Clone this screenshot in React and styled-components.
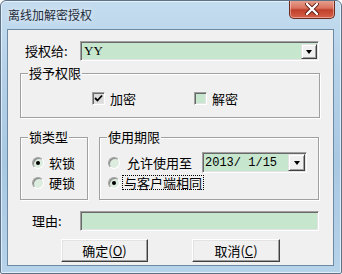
import React from 'react'
import styled, { createGlobalStyle } from 'styled-components'

const GlobalStyle = createGlobalStyle`
    html, body {
        margin: 0;
        padding: 0;
        background: #ffffff;
    }
    * {
        box-sizing: border-box;
    }
`;

const CJK = `"SimSun", "Noto Sans CJK SC", "DejaVu Sans", sans-serif`;

const Frame = styled.div`
    width: 342px;
    height: 274px;
    display: flex;
    flex-direction: column;
    padding: 0 7px 7px 6px;
    border: 1px solid #5b7288;
    border-radius: 6px 6px 2px 2px;
    background: linear-gradient(180deg, #c4dcef 0%, #b3d0e8 30%, #a9c8e2 60%, #b6d3ea 100%);
    box-shadow: inset 0 0 0 1px rgba(255, 255, 255, 0.6);
    overflow: hidden;
`;

const TitleBar = styled.div`
    height: 28px;
    display: flex;
    align-items: flex-start;
    justify-content: space-between;
`;

const Title = styled.div`
    margin: 7px 0 0 1px;
    font-family: ${CJK};
    font-size: 12px;
    line-height: 14px;
    color: #1e2b3a;
    text-shadow: 0 0 6px rgba(255, 255, 255, 0.9);
`;

const CloseButton = styled.div`
    width: 46px;
    height: 19px;
    margin-right: -1px;
    margin-top: -1px;
    display: flex;
    align-items: center;
    justify-content: center;
    border: 1px solid #6b2a22;
    border-top: none;
    border-radius: 0 0 5px 5px;
    background: linear-gradient(180deg, #e8a493 0%, #d8735f 45%, #c0402a 55%, #d5604a 100%);
    box-shadow: inset 0 0 0 1px rgba(255, 220, 210, 0.5);
`;

const Client = styled.div`
    flex: 1;
    background: #f0f0f0;
    border: 1px solid #6d8aa5;
    padding: 11px 14px 0 12px;
    display: flex;
    flex-direction: column;
    font-family: ${CJK};
    font-size: 13px;
    color: #000;
`;

const Row = styled.div`
    display: flex;
    align-items: center;
    height: ${p => p.$h || 20}px;
    margin-top: ${p => p.$mt || 0}px;
`;

const Label = styled.div`
    width: 60px;
    padding-left: ${p => p.$pl || 5}px;
    line-height: 14px;
    white-space: nowrap;
`;

const Sunken = styled.div`
    display: flex;
    align-items: center;
    width: ${p => p.$w}px;
    height: ${p => p.$h || 20}px;
    margin-left: ${p => p.$ml || 0}px;
    background: #c7e6ce;
    border-top: 1px solid #a0a0a0;
    border-left: 1px solid #a0a0a0;
    border-right: 1px solid #ffffff;
    border-bottom: 1px solid #ffffff;
    box-shadow: inset 1px 1px 0 #696969, inset -1px -1px 0 #e3e3e3;
`;

const FieldText = styled.div`
    flex: 1;
    padding-left: ${p => p.$pl || 4}px;
    font-family: ${p => p.$mono ? '"Liberation Mono", monospace' : '"Liberation Serif", serif'};
    font-size: ${p => p.$mono ? 12 : 13}px;
    line-height: 14px;
    white-space: pre;
`;

const DropButton = styled.div`
    width: ${p => p.$w || 16}px;
    height: ${p => p.$h || 16}px;
    margin-right: 1px;
    display: flex;
    align-items: center;
    justify-content: center;
    background: #f0f0f0;
    border-top: 1px solid #e3e3e3;
    border-left: 1px solid #e3e3e3;
    border-right: 1px solid #404040;
    border-bottom: 1px solid #404040;
    box-shadow: inset 1px 1px 0 #ffffff, inset -1px -1px 0 #a0a0a0;
`;

const Arrow = styled.div`
    width: 0;
    height: 0;
    border-left: 3.5px solid transparent;
    border-right: 3.5px solid transparent;
    border-top: 4px solid #000;
    margin-top: 1px;
`;

const Group = styled.fieldset`
    margin: ${p => p.$mt || 0}px 0 0 0;
    padding: 0;
    min-width: 0;
    width: ${p => p.$w}px;
    border: 1px solid #a0a0a0;
    box-shadow: inset 1px 1px 0 #ffffff, 1px 1px 0 #ffffff;
    border-radius: 0;
`;

const Legend = styled.legend`
    margin-left: 7px;
    padding: 0 1px;
    line-height: 14px;
    background: #f0f0f0;
    position: relative;
`;

const GroupBody = styled.div`
    padding: ${p => p.$pad};
`;

const CheckGrid = styled.div`
    display: grid;
    grid-template-columns: 102px auto;
    align-items: center;
`;

const Option = styled.label`
    display: flex;
    align-items: center;
    gap: ${p => p.$gap || 5}px;
    height: 13px;
    line-height: 14px;
    white-space: nowrap;
`;

const Check = styled.span`
    width: 13px;
    height: 13px;
    display: flex;
    align-items: center;
    justify-content: center;
    background: ${p => p.$checked ? '#dcdcdc' : '#c7e6ce'};
    border-top: 1px solid #a0a0a0;
    border-left: 1px solid #a0a0a0;
    border-right: 1px solid #ffffff;
    border-bottom: 1px solid #ffffff;
    box-shadow: inset 1px 1px 0 #696969, inset -1px -1px 0 #e3e3e3;
`;

const Radio = styled.span`
    width: 12px;
    height: 12px;
    border-radius: 50%;
    display: flex;
    align-items: center;
    justify-content: center;
    background: #dcecdf;
    border: 1px solid;
    border-color: #a0a0a0 #ffffff #ffffff #a0a0a0;
    box-shadow: inset 1px 1px 0 #8a8a8a;
    &::after {
        content: "";
        width: 4px;
        height: 4px;
        border-radius: 50%;
        background: ${p => p.$on ? '#000' : 'transparent'};
    }
`;

const Stack = styled.div`
    display: flex;
    flex-direction: column;
    gap: ${p => p.$gap || 0}px;
`;

const GroupsRow = styled.div`
    display: flex;
    gap: 11px;
    margin-top: 12px;
`;

const OptionRow = styled.div`
    display: flex;
    align-items: center;
    height: ${p => p.$h || 13}px;
`;

const Focus = styled.span`
    outline: 1px dotted #000;
    outline-offset: 0;
    padding: 0 1px;
    line-height: 13px;
`;

const ButtonRow = styled.div`
    display: flex;
    margin-top: 8px;
    padding-left: 41px;
    gap: 44px;
`;

const Button = styled.button`
    width: ${p => p.$w}px;
    height: 23px;
    padding: 0;
    font-family: ${CJK};
    font-size: 13px;
    color: #000;
    background: #f0f0f0;
    border-top: 1px solid #ffffff;
    border-left: 1px solid #ffffff;
    border-right: 1px solid #404040;
    border-bottom: 1px solid #404040;
    box-shadow: inset -1px -1px 0 #a0a0a0, inset 1px 1px 0 #e3e3e3;
    & u {
        text-decoration: underline;
    }
`;

const CloseGlyph = () => (
    <svg width="14" height="12" viewBox="0 0 14 12">
        <path d="M2 1 L12 11 M12 1 L2 11" stroke="#5a1a12" strokeWidth="4" strokeLinecap="round" />
        <path d="M2 1 L12 11 M12 1 L2 11" stroke="#ffffff" strokeWidth="2.4" strokeLinecap="round" />
    </svg>
)

const Tick = () => (
    <svg width="9" height="9" viewBox="0 0 9 9">
        <path d="M1 4 L3.5 6.5 L8 1.5" stroke="#000" strokeWidth="1.8" fill="none" />
    </svg>
)

const App = () => {
    return (
        <>
            <GlobalStyle />
            <Frame>
                <TitleBar>
                    <Title>离线加解密授权</Title>
                    <CloseButton><CloseGlyph /></CloseButton>
                </TitleBar>
                <Client>
                    <Row $h={20}>
                        <Label $pl={5}>授权给:</Label>
                        <Sunken $w={239}>
                            <FieldText $pl={3}>YY</FieldText>
                            <DropButton $w={16} $h={15}><Arrow /></DropButton>
                        </Sunken>
                    </Row>

                    <Group $mt={5} $w={300}>
                        <Legend>授予权限</Legend>
                        <GroupBody $pad="12px 0 12px 71px">
                            <CheckGrid>
                                <Option>
                                    <Check $checked><Tick /></Check>
                                    加密
                                </Option>
                                <Option>
                                    <Check />
                                    解密
                                </Option>
                            </CheckGrid>
                        </GroupBody>
                    </Group>

                    <GroupsRow>
                        <Group $w={68}>
                            <Legend>锁类型</Legend>
                            <GroupBody $pad="12px 0 10px 11px">
                                <Stack $gap={7}>
                                    <Option $gap={5}><Radio $on />软锁</Option>
                                    <Option $gap={5}><Radio />硬锁</Option>
                                </Stack>
                            </GroupBody>
                        </Group>
                        <Group $w={220}>
                            <Legend>使用期限</Legend>
                            <GroupBody $pad="8px 0 9px 8px">
                                <Stack $gap={3}>
                                    <OptionRow $h={21}>
                                        <Option $gap={7}><Radio />允许使用至</Option>
                                        <Sunken $w={105} $h={21} $ml={10}>
                                            <FieldText $mono $pl={2}>2013/ 1/15</FieldText>
                                            <DropButton $w={17} $h={17}><Arrow /></DropButton>
                                        </Sunken>
                                    </OptionRow>
                                    <OptionRow>
                                        <Option $gap={3}><Radio $on /><Focus>与客户端相同</Focus></Option>
                                    </OptionRow>
                                </Stack>
                            </GroupBody>
                        </Group>
                    </GroupsRow>

                    <Row $h={20} $mt={11}>
                        <Label $pl={12}>理由:</Label>
                        <Sunken $w={240} />
                    </Row>

                    <ButtonRow>
                        <Button $w={87}>确定(<u>O</u>)</Button>
                        <Button $w={88}>取消(<u>C</u>)</Button>
                    </ButtonRow>
                </Client>
            </Frame>
        </>
    )
}

export default App
